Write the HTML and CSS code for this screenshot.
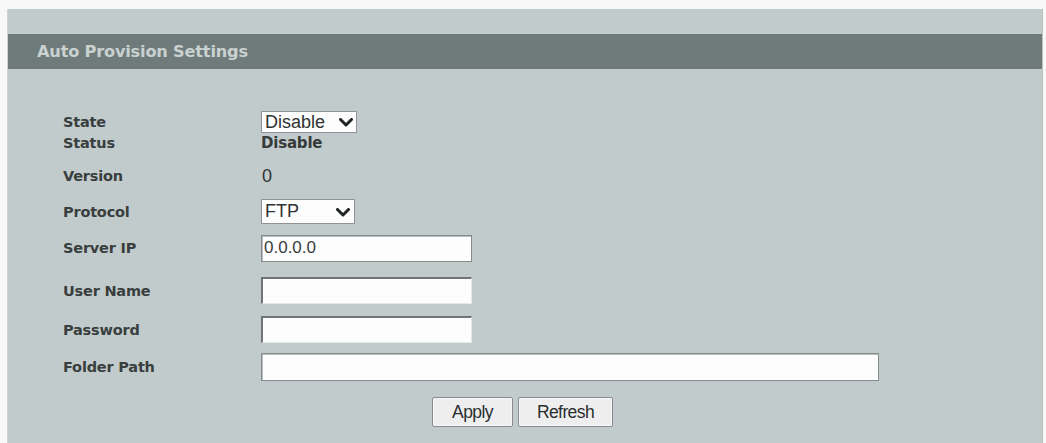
FILE: index.html
```html
<!DOCTYPE html>
<html lang="en">
<head>
<meta charset="utf-8">
<title>Auto Provision Settings</title>
<link rel="stylesheet" href="styles.css">
</head>
<body>
<div class="page">
  <section class="panel">
    <h1 class="panel-title">Auto Provision Settings</h1>
    <form class="settings">
      <label class="label" for="state">State</label>
      <div class="control">
        <span class="select-wrap select-state">
          <select id="state" class="select"><option>Disable</option><option>Enable</option></select>
          <svg class="chevron" viewBox="0 0 14 9" width="14" height="9"><polyline points="1.5,1.5 7,7 12.5,1.5"/></svg>
        </span>
      </div>

      <span class="label">Status</span>
      <div class="control"><span class="value-bold">Disable</span></div>

      <span class="label">Version</span>
      <div class="control"><span class="value">0</span></div>

      <label class="label" for="protocol">Protocol</label>
      <div class="control">
        <span class="select-wrap select-protocol">
          <select id="protocol" class="select"><option>FTP</option><option>TFTP</option><option>HTTP</option></select>
          <svg class="chevron" viewBox="0 0 14 9" width="14" height="9"><polyline points="1.5,1.5 7,7 12.5,1.5"/></svg>
        </span>
      </div>

      <label class="label" for="server-ip">Server IP</label>
      <div class="control"><input id="server-ip" class="input input-short" type="text" value="0.0.0.0"></div>

      <label class="label" for="user-name">User Name</label>
      <div class="control"><input id="user-name" class="input input-short input-inset" type="text"></div>

      <label class="label" for="password">Password</label>
      <div class="control"><input id="password" class="input input-short input-inset" type="password"></div>

      <label class="label" for="folder-path">Folder Path</label>
      <div class="control"><input id="folder-path" class="input input-long" type="text"></div>
    </form>
    <div class="actions">
      <button type="button" class="btn btn-apply">Apply</button>
      <button type="button" class="btn btn-refresh">Refresh</button>
    </div>
  </section>
</div>
</body>
</html>
```

FILE: styles.css
```css
html, body {
  margin: 0;
  padding: 0;
  background: #f8f8f8;
}

.page {
  padding: 9px 3px 0 7px;
  height: 434px;
  overflow: hidden;
}

.panel {
  background: #c2cbcb;
  height: 100%;
  padding-top: 25px;
  box-sizing: border-box;
  border-left: 1px solid #cdd4d4;
  border-right: 1px solid #b9c1c1;
}

.panel-title {
  margin: 0;
  height: 35px;
  line-height: 35px;
  background: #6f7b7a;
  color: #c9d1d1;
  font-family: "DejaVu Sans", sans-serif;
  font-weight: bold;
  font-size: 16.2px;
  padding-left: 29px;
  letter-spacing: -0.2px;
}

.settings {
  margin: 42px 0 0 55px;
  display: grid;
  grid-template-columns: 198px 1fr;
  grid-template-rows: 22px 20px 46px 25px 48px 37px 41px 34px;
  align-items: center;
}

.label {
  font-family: "DejaVu Sans", sans-serif;
  font-weight: bold;
  font-size: 14.5px;
  color: #393e3e;
  letter-spacing: -0.2px;
}

.control {
  display: flex;
  align-items: center;
}

.value-bold {
  font-family: "DejaVu Sans", sans-serif;
  font-weight: bold;
  font-size: 15px;
  color: #353a3a;
  letter-spacing: -0.2px;
}

.value {
  font-family: "Liberation Sans", Arial, sans-serif;
  font-size: 18px;
  color: #2f3333;
  padding-left: 1px;
}

.select-wrap {
  position: relative;
  display: inline-block;
}

.select {
  appearance: none;
  -webkit-appearance: none;
  margin: 0;
  background: #fdfdfd;
  border: 1px solid #8e9494;
  border-radius: 0;
  font-family: "Liberation Sans", Arial, sans-serif;
  font-size: 18px;
  color: #2f3333;
  padding: 0 0 0 3px;
  box-sizing: border-box;
}

.select-state .select {
  width: 96px;
  height: 22px;
  line-height: 20px;
}

.select-protocol .select {
  width: 94px;
  height: 25px;
  line-height: 23px;
}

.chevron {
  position: absolute;
  top: 50%;
  margin-top: -4px;
  fill: none;
  stroke: #202424;
  stroke-width: 3;
  stroke-linecap: round;
  stroke-linejoin: round;
  pointer-events: none;
}

.select-state .chevron { right: 4px; }
.select-protocol .chevron { right: 5px; }

.input {
  margin: 0;
  background: #fdfdfd;
  border: 1px solid #868c8c;
  box-shadow: inset 1px 1px 0 #b8bdbd;
  font-family: "Liberation Sans", Arial, sans-serif;
  font-size: 17px;
  color: #3a3e3e;
  padding: 0 2px;
  box-sizing: border-box;
  height: 27px;
}

.input-short { width: 211px; }

.input-inset {
  border-color: #6f7575 #e4e8e8 #e4e8e8 #6f7575;
  border-width: 2px 1px 1px 2px;
  box-shadow: none;
}

.input-long {
  width: 618px;
  height: 28px;
}

.actions {
  display: flex;
  justify-content: center;
  gap: 5px;
  padding-top: 13px;
  padding-right: 5px;
}

.btn {
  margin: 0;
  height: 30px;
  background: #eeeeee;
  border: 1px solid #878d8d;
  border-radius: 2px;
  box-shadow: inset 0 0 0 1px #f7f7f7;
  font-family: "Liberation Sans", Arial, sans-serif;
  font-size: 17.5px;
  color: #2a2e2e;
  letter-spacing: -0.6px;
  padding: 0;
}

.btn-apply { width: 81px; }
.btn-refresh { width: 95px; }
```
